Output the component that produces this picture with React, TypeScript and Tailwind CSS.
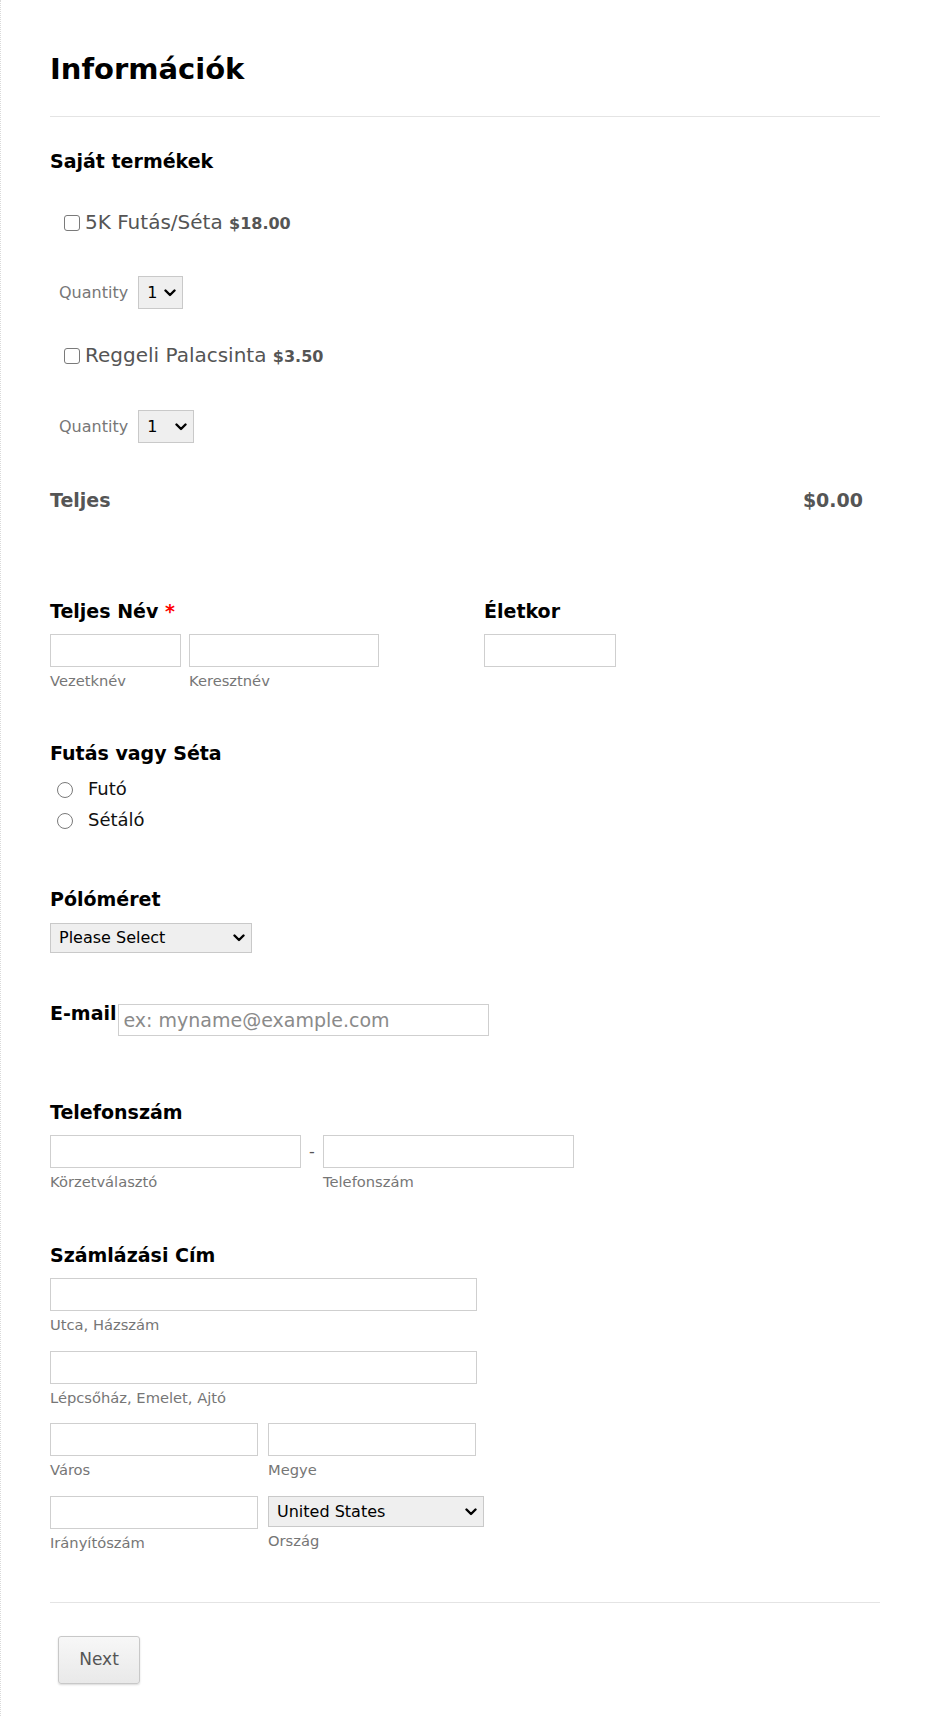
import { useState } from 'react'

// chevron used on the select boxes
function Chevron({ className = '' }: { className?: string }) {
  return (
    <svg viewBox="0 0 12 8" className={className} fill="none">
      <path d="M1.5 1.5 L6 6 L10.5 1.5" stroke="#000" strokeWidth="2.4" strokeLinecap="round" strokeLinejoin="round" />
    </svg>
  )
}

function Select({ value, width, height, textSize = 'text-[16px]', pad = 'pl-[8px]', options }: {
  value: string
  width: string
  height: string
  textSize?: string
  pad?: string
  options: string[]
}) {
  return (
    <div className={`relative ${width} ${height}`}>
      <select
        defaultValue={value}
        className={`appearance-none w-full h-full border border-[#c9c9c9] bg-[#efefef] text-black ${textSize} ${pad} outline-none`}
      >
        {options.map((o) => (
          <option key={o}>{o}</option>
        ))}
      </select>
      <Chevron className="pointer-events-none absolute right-[7px] top-1/2 -translate-y-1/2 w-[12px] h-[8px]" />
    </div>
  )
}

function Sub({ children }: { children: React.ReactNode }) {
  return <div className="mt-[5px] text-[14.7px] leading-[18px] text-[#767676]">{children}</div>
}

function Field({ width, sub }: { width: string; sub?: string }) {
  return (
    <div className={width}>
      <input type="text" className="block w-full h-[33px] border border-[#cfcfcf] bg-white outline-none" />
      {sub && <Sub>{sub}</Sub>}
    </div>
  )
}

function Label({ children, className = '' }: { children: React.ReactNode; className?: string }) {
  return <h2 className={`text-[19px] leading-[24px] font-bold text-black ${className}`}>{children}</h2>
}

const PRODUCTS = [
  { name: '5K Futás/Séta', price: '$18.00', selectWidth: 'w-[45px]' },
  { name: 'Reggeli Palacsinta', price: '$3.50', selectWidth: 'w-[56px]' },
]

export default function App() {
  const [runner, setRunner] = useState('')

  return (
    <div className="min-h-screen bg-white border-l border-dotted border-[#dadada] font-['DejaVu_Sans',sans-serif]">
      <div className="pl-[49px] pr-[50px] pt-[51px] pb-[34px]">
        <h1 className="text-[29px] leading-[36px] font-bold text-black">Információk</h1>
        <div className="mt-[29px] h-px bg-[#e4e4e4]" />

        {/* Products */}
        <Label className="mt-[32px]">Saját termékek</Label>
        {PRODUCTS.map((p, i) => (
          <div key={p.name} className={i === 0 ? 'mt-[36px]' : 'mt-[33px]'}>
            <label className="flex items-center h-[28px] ml-[14px]">
              <input
                type="checkbox"
                className="appearance-none m-0 w-[16px] h-[16px] border border-[#7a7a7a] rounded-[3px] bg-white"
              />
              <span className="ml-[5px] text-[20px] leading-[28px] text-[#555]">
                {p.name} <b className="text-[16px] text-[#555]">{p.price}</b>
              </span>
            </label>
            <div className={`flex items-center ml-[9px] ${i === 0 ? 'mt-[39px]' : 'mt-[40px]'}`}>
              <span className="text-[16px] text-[#777]">Quantity</span>
              <div className="ml-[10px]">
                <Select value="1" width={p.selectWidth} height="h-[33px]" options={['1', '2', '3', '4', '5']} />
              </div>
            </div>
          </div>
        ))}

        {/* Total */}
        <div className="mt-[45px] flex items-baseline justify-between pr-[17px] font-bold text-[#555]">
          <span className="text-[19px] leading-[24px]">Teljes</span>
          <span className="text-[19px] leading-[24px]">$0.00</span>
        </div>

        {/* Name + age */}
        <div className="mt-[87px] flex">
          <div className="w-[434px]">
            <Label>
              Teljes Név <span className="text-[#ff0000]">*</span>
            </Label>
            <div className="mt-[11px] flex gap-[8px]">
              <Field width="w-[131px]" sub="Vezetknév" />
              <Field width="w-[190px]" sub="Keresztnév" />
            </div>
          </div>
          <div>
            <Label>Életkor</Label>
            <div className="mt-[11px]">
              <Field width="w-[132px]" />
            </div>
          </div>
        </div>

        {/* Run or walk */}
        <Label className="mt-[51px]">Futás vagy Séta</Label>
        <div className="mt-[10px]">
          {['Futó', 'Sétáló'].map((opt) => (
            <label key={opt} className="flex items-start h-[31px] ml-[7px]">
              <input
                type="radio"
                name="runner"
                checked={runner === opt}
                onChange={() => setRunner(opt)}
                className="appearance-none m-0 mt-[7px] w-[16px] h-[16px] rounded-full border border-[#7a7a7a] bg-white"
              />
              <span className="ml-[15px] text-[18px] leading-[28px] text-[#111]">{opt}</span>
            </label>
          ))}
        </div>

        {/* T-shirt size */}
        <Label className="mt-[50px]">Pólóméret</Label>
        <div className="mt-[12px]">
          <Select value="Please Select" width="w-[202px]" height="h-[30px]" options={['Please Select', 'S', 'M', 'L', 'XL']} />
        </div>

        {/* Email */}
        <div className="mt-[48px] flex items-start">
          <Label>E-mail</Label>
          <input
            type="email"
            placeholder="ex: myname@example.com"
            className="ml-[1px] mt-[3px] w-[371px] h-[32px] border border-[#cfcfcf] pl-[5px] text-[19px] placeholder:text-[#8a8a8a] outline-none"
          />
        </div>

        {/* Phone */}
        <Label className="mt-[64px]">Telefonszám</Label>
        <div className="mt-[11px] flex">
          <Field width="w-[251px]" sub="Körzetválasztó" />
          <span className="w-[22px] h-[33px] flex items-center justify-center text-[16px] text-[#555]">-</span>
          <Field width="w-[251px]" sub="Telefonszám" />
        </div>

        {/* Billing address */}
        <Label className="mt-[52px]">Számlázási Cím</Label>
        <div className="mt-[11px]">
          <Field width="w-[427px]" sub="Utca, Házszám" />
        </div>
        <div className="mt-[17px]">
          <Field width="w-[427px]" sub="Lépcsőház, Emelet, Ajtó" />
        </div>
        <div className="mt-[16px] flex gap-[10px]">
          <Field width="w-[208px]" sub="Város" />
          <Field width="w-[208px]" sub="Megye" />
        </div>
        <div className="mt-[17px] flex gap-[10px]">
          <Field width="w-[208px]" sub="Irányítószám" />
          <div>
            <Select
              value="United States"
              width="w-[216px]"
              height="h-[31px]"
              options={['United States', 'Magyarország', 'Canada']}
            />
            <Sub>Ország</Sub>
          </div>
        </div>

        <div className="mt-[50px] h-px bg-[#e4e4e4]" />

        <button
          type="button"
          className="mt-[33px] ml-[8px] w-[82px] h-[48px] rounded-[3px] border border-[#c8c8c8] bg-gradient-to-b from-[#f7f7f7] to-[#e9e9e9] shadow-[0_1px_2px_rgba(0,0,0,0.15)] text-[17px] text-[#555]"
        >
          Next
        </button>
      </div>
    </div>
  )
}
